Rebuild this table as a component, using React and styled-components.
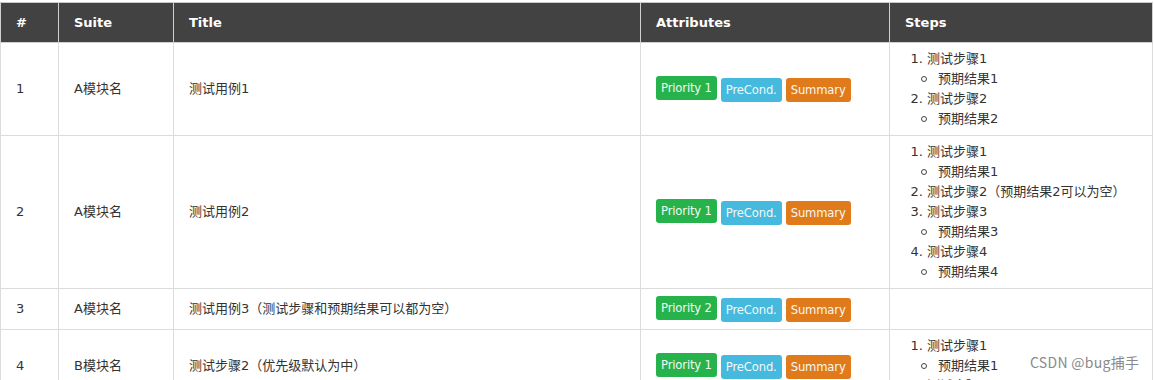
import React from 'react'
import styled, { createGlobalStyle } from 'styled-components'

const GlobalStyle = createGlobalStyle`
  body {
    margin: 0;
    background: #fff;
    font-family: "DejaVu Sans", "Noto Sans CJK SC", sans-serif;
    overflow: hidden;
  }
`

const cases = [
  {
    id: 1,
    suite: 'A模块名',
    title: '测试用例1',
    priority: 1,
    steps: [
      { step: '测试步骤1', result: '预期结果1' },
      { step: '测试步骤2', result: '预期结果2' },
    ],
  },
  {
    id: 2,
    suite: 'A模块名',
    title: '测试用例2',
    priority: 1,
    steps: [
      { step: '测试步骤1', result: '预期结果1' },
      { step: '测试步骤2（预期结果2可以为空）' },
      { step: '测试步骤3', result: '预期结果3' },
      { step: '测试步骤4', result: '预期结果4' },
    ],
  },
  {
    id: 3,
    suite: 'A模块名',
    title: '测试用例3（测试步骤和预期结果可以都为空）',
    priority: 2,
    steps: [],
  },
  {
    id: 4,
    suite: 'B模块名',
    title: '测试步骤2（优先级默认为中）',
    priority: 1,
    steps: [
      { step: '测试步骤1', result: '预期结果1' },
      { step: '测试步骤2' },
    ],
  },
]

const App = () => {
  return (
    <>
      <GlobalStyle />
      <Page>
        <Table>
          <colgroup>
            <col style={{ width: 58 }} />
            <col style={{ width: 115 }} />
            <col style={{ width: 467 }} />
            <col style={{ width: 249 }} />
            <col />
          </colgroup>
          <thead>
            <tr>
              <Th>#</Th>
              <Th>Suite</Th>
              <Th>Title</Th>
              <Th>Attributes</Th>
              <Th>Steps</Th>
            </tr>
          </thead>
          <tbody>
            {cases.map((c) => (
              <tr key={c.id}>
                <Td>{c.id}</Td>
                <Td>{c.suite}</Td>
                <Td>{c.title}</Td>
                <Td>
                  <Badges>
                    <Badge color="#26b34b" raised>Priority {c.priority}</Badge>
                    <Badge color="#45b9de">PreCond.</Badge>
                    <Badge color="#e07a1b">Summary</Badge>
                  </Badges>
                </Td>
                <Td>
                  {c.steps.length > 0 && (
                    <Steps>
                      {c.steps.map((s, i) => (
                        <li key={i}>
                          {s.step}
                          {s.result && (
                            <Results>
                              <li>{s.result}</li>
                            </Results>
                          )}
                        </li>
                      ))}
                    </Steps>
                  )}
                </Td>
              </tr>
            ))}
          </tbody>
        </Table>
        <Watermark>CSDN @bug捕手</Watermark>
      </Page>
    </>
  )
}

export default App

const Page = styled.div`
  position: relative;
  width: 1154px;
  height: 380px;
  overflow: hidden;
`

const Table = styled.table`
  width: 1153px;
  border-collapse: collapse;
  table-layout: fixed;
  margin-top: 2px;
  border: 1px solid #d6d6d6;
  font-size: 13px;
  color: #333;
`

const Th = styled.th`
  background: #424242;
  color: #fff;
  font-weight: bold;
  text-align: left;
  line-height: 20px;
  padding: 10px 15px 9px;
  border: 1px solid #d0d0d0;
  border-top: 1px solid #c8c8c8;
`

const Td = styled.td`
  padding: 6px 15px;
  line-height: 20px;
  vertical-align: middle;
  border: 1px solid #dcdcdc;
`

const Badges = styled.div`
  display: flex;
  align-items: flex-start;
  gap: 4px;
  padding: 1px 0;
`

const Badge = styled.span`
  display: inline-block;
  background: ${(p) => p.color};
  color: #f4f8f4;
  font-size: 11.6px;
  line-height: 17px;
  padding: 4px 5px 3px;
  border-radius: 3px;
  margin-top: ${(p) => (p.raised ? '0' : '2px')};
  white-space: nowrap;
  letter-spacing: -0.15px;
`

const Steps = styled.ol`
  margin: 0;
  padding-left: 22px;

  & > li::marker {
    color: #333;
  }
`

const Results = styled.ul`
  list-style: none;
  margin: 0;
  padding: 0;

  & > li {
    display: flex;
    align-items: center;
    gap: 11px;
    margin-left: -6px;
  }

  & > li::before {
    content: '';
    width: 4px;
    height: 4px;
    border: 1px solid #444;
    border-radius: 50%;
  }
`

const Watermark = styled.div`
  position: absolute;
  left: 1030px;
  top: 352px;
  font-family: "Noto Sans CJK SC", sans-serif;
  font-size: 14px;
  color: #8a8a8a;
  letter-spacing: 0.3px;
`
